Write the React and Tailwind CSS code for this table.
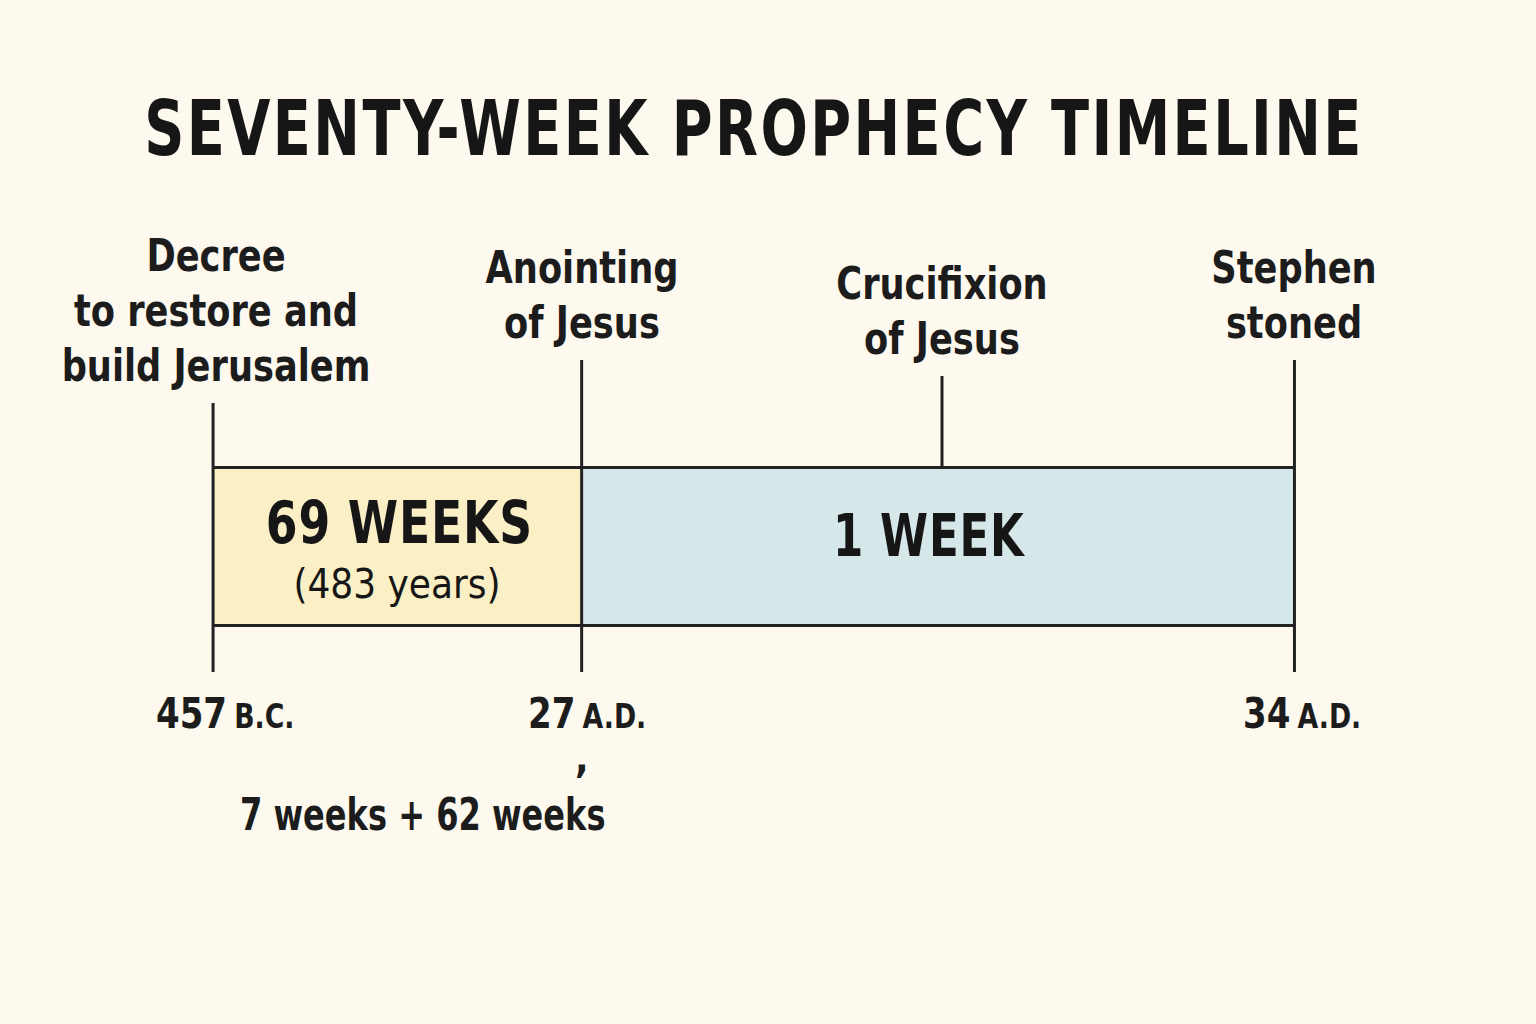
import React from "react";

const font = { fontFamily: '"DejaVu Sans Condensed", "Liberation Sans", sans-serif' };

// marker = label + tick line, anchored at the tick's lower end
const Marker = ({ x, bottom, line, lines, shift = 0 }) => (
  <div className="absolute -translate-x-1/2 flex flex-col items-center gap-[10px]" style={{ left: x, bottom }}>
    <div
      className="text-center text-[45px] leading-[55px] font-bold text-[#1c1c1c] whitespace-nowrap scale-x-[0.87]"
      style={{ marginLeft: shift }}
    >
      {lines.map((l) => (
        <div key={l}>{l}</div>
      ))}
    </div>
    <div className="w-[3px] bg-[#222]" style={{ height: line }} />
  </div>
);

const DateLabel = ({ x, num, era }) => (
  <div className="absolute top-[682px] font-bold text-[#1c1c1c] whitespace-nowrap origin-left scale-x-[0.9]" style={{ left: x }}>
    <span className="text-[42px]">{num}</span>
    <span className="text-[33px] ml-2">{era}</span>
  </div>
);

export default function App() {
  return (
    <div className="w-[1536px] h-[1024px] bg-[#fdf9ef] relative overflow-hidden" style={font}>
      <h1 className="pt-[91px] text-center text-[76px] font-bold tracking-[3px] text-[#161616] leading-none whitespace-nowrap scale-x-[0.815] -translate-x-[14px]">
        SEVENTY-WEEK PROPHECY TIMELINE
      </h1>

      <div className="absolute left-[212px] top-[466px] w-[1083px] h-[161px] flex border-y-[3px] border-[#222]">
        <div className="w-[370px] bg-[#fbefc5] flex flex-col items-center justify-center text-[#161616]">
          <div className="text-[59px] font-bold leading-none tracking-[1px] scale-x-[0.86] mt-[4px] ml-[4px]">69 WEEKS</div>
          <div className="text-[40px] leading-none mt-[12px]">(483 years)</div>
        </div>
        <div className="flex-1 bg-[#d6e7ea] flex items-center justify-center text-[#161616]">
          <div className="text-[59px] font-bold leading-none tracking-[1px] scale-x-[0.82] -ml-[20px] -mt-[22px]">1 WEEK</div>
        </div>
      </div>

      <Marker x={213} bottom={352} line={269} shift={6} lines={["Decree", "to restore and", "build Jerusalem"]} />
      <Marker x={582} bottom={352} line={312} lines={["Anointing", "of Jesus"]} />
      <Marker x={942} bottom={556} line={92} lines={["Crucifixion", "of Jesus"]} />
      <Marker x={1294} bottom={352} line={312} lines={["Stephen", "stoned"]} />

      <DateLabel x={156} num="457" era="B.C." />
      <DateLabel x={528} num="27" era="A.D." />
      <DateLabel x={1243} num="34" era="A.D." />

      <div className="absolute left-[575px] top-[728px] text-[40px] font-bold text-[#1c1c1c]">,</div>
      <div className="absolute left-[240px] top-[782px] text-[44px] font-bold text-[#1c1c1c] whitespace-nowrap origin-left scale-x-[0.81]">
        7 weeks + 62 weeks
      </div>
    </div>
  );
}
